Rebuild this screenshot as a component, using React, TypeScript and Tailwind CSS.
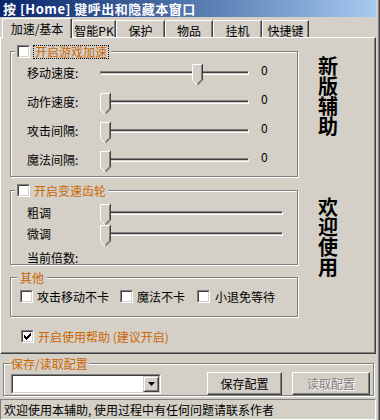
import type { ReactNode } from "react"

const CHECK_ROWS = [
  [6, 1],
  [5, 2],
  [4, 3],
  [3, 3],
  [0, 5],
  [1, 3],
  [2, 1],
]

function CheckBox({ checked }: { checked?: boolean }) {
  return (
    <div className="h-[13px] w-[13px] shrink-0 border border-t-[#808080] border-l-[#808080] border-r-white border-b-white">
      <div className="flex h-full w-full items-center justify-center border border-t-[#404040] border-l-[#404040] border-r-[#d4d0c8] border-b-[#d4d0c8] bg-white">
        {checked && (
          <svg width="7" height="7" viewBox="0 0 7 7">
            {CHECK_ROWS.map(([x, w], i) => (
              <rect key={i} x={x} y={i} width={w} height={1} fill="#000" />
            ))}
            <rect x={0} y={2} width={1} height={3} fill="#000" />
            <rect x={1} y={3} width={1} height={1} fill="#000" />
          </svg>
        )}
      </div>
    </div>
  )
}

function Thumb() {
  return (
    <svg width="11" height="21" viewBox="0 0 11 21">
      <path d="M0 0H11V16L5.5 21L0 16Z" fill="#d4d0c8" />
      <path d="M0.5 16V0.5H10" stroke="#fff" fill="none" />
      <path d="M0.5 16.5L5 21" stroke="#fff" fill="none" />
      <path d="M10.5 0V16L5.5 21" stroke="#404040" fill="none" />
      <path d="M9.5 1V15.5L5.5 19.5" stroke="#808080" fill="none" />
    </svg>
  )
}

function Slider({ className, pos = 0 }: { className: string; pos?: number }) {
  return (
    <div
      className={`relative h-[4px] shrink-0 border border-t-[#808080] border-l-[#808080] border-r-white border-b-white shadow-[inset_0_1px_0_#404040] ${className}`}
    >
      {/* thumb sits over the track */}
      <div className="absolute top-[-8px]" style={{ left: pos - 1 }}>
        <Thumb />
      </div>
    </div>
  )
}

function Group({
  header,
  className,
  headerClass,
  children,
}: {
  header: ReactNode
  className: string
  headerClass: string
  children?: ReactNode
}) {
  return (
    <div className={`shrink-0 border border-[#808080] shadow-[1px_1px_0_#fff,inset_1px_1px_0_#fff] ${className}`}>
      <div className={`-mt-[7px] flex h-[13px] w-fit items-center bg-[#d4d0c8] ${headerClass}`}>{header}</div>
      {children}
    </div>
  )
}

const speedRows = [
  { label: "移动速度:", pos: 92 },
  { label: "动作速度:", pos: 0 },
  { label: "攻击间隔:", pos: 0 },
  { label: "魔法间隔:", pos: 0 },
]

const tabs = [
  { label: "智能PK", w: "w-[44px]" },
  { label: "保护", w: "w-[49px]" },
  { label: "物品", w: "w-[48px]" },
  { label: "挂机", w: "w-[49px]" },
  { label: "快捷键", w: "w-[47px]" },
]

export default function App() {
  return (
    <div className="flex h-[420px] w-[380px] flex-col overflow-hidden bg-[#d4d0c8] pr-[4px] font-['Noto_Sans_CJK_SC',sans-serif] text-[12px] leading-[13px] text-black shadow-[inset_-1px_0_0_#404040,inset_-2px_0_0_#808080]">
      {/* Title bar */}
      <div className="mb-[1px] flex h-[17px] shrink-0 items-center bg-linear-to-r from-[#0a246a] to-[#a6caf0] pl-[3px] text-[13px] font-bold tracking-[0.5px] whitespace-pre text-white">
        按 [Home] 键呼出和隐藏本窗口
      </div>

      {/* Tabs */}
      <div className="flex h-[19px] shrink-0 items-end pl-[2px]">
        <div className="relative z-10 -mb-px flex h-[20px] w-[70px] items-center justify-center rounded-tl-[2px] border-t border-r border-l border-t-white border-r-[#404040] border-l-white bg-[#d4d0c8] pb-[1px] shadow-[inset_-1px_0_0_#808080]">
          加速/基本
        </div>
        {tabs.map((t) => (
          <div
            key={t.label}
            className={`flex h-[17px] items-center justify-center rounded-tl-[2px] border-t border-r border-l border-t-white border-r-[#404040] border-l-white pt-[2px] shadow-[inset_-1px_0_0_#808080] ${t.w}`}
          >
            {t.label}
          </div>
        ))}
      </div>

      {/* Tab panel */}
      <div className="flex h-[317px] shrink-0 border border-t-white border-r-[#404040] border-b-[#404040] border-l-white shadow-[inset_-1px_-1px_0_#808080]">
        <div className="ml-[9px] flex w-[288px] flex-col">
          <Group
            className="mt-[13px] h-[126px]"
            headerClass="ml-[4px] px-[2px]"
            header={
              <>
                <CheckBox />
                <span className="ml-[3px] flex h-[14px] items-center border border-dotted border-black px-[1px] leading-none whitespace-nowrap text-[#cc6600]">
                  开启游戏加速
                </span>
              </>
            }
          >
            {speedRows.map((r) => (
              <div key={r.label} className="flex h-[29px] items-center pl-[16px]">
                <span className="w-[73px] shrink-0">{r.label}</span>
                <Slider className="w-[149px]" pos={r.pos} />
                <span className="mb-[6px] ml-[12px]">0</span>
              </div>
            ))}
          </Group>

          <Group
            className="mt-[13px] h-[75px]"
            headerClass="ml-[4px] px-[2px]"
            header={
              <>
                <CheckBox />
                <span className="ml-[4px] text-[#cc6600]">开启变速齿轮</span>
              </>
            }
          >
            <div className="mt-[5px] flex h-[21px] items-center pl-[16px]">
              <span className="w-[73px] shrink-0">粗调</span>
              <Slider className="w-[183px]" />
            </div>
            <div className="flex h-[21px] items-center pl-[16px]">
              <span className="w-[73px] shrink-0">微调</span>
              <Slider className="w-[183px]" />
            </div>
            <div className="mt-[7px] pl-[16px]">当前倍数:</div>
          </Group>

          <Group
            className="mt-[12px] h-[40px]"
            headerClass="ml-[6px] px-[3px]"
            header={<span className="text-[#cc6600]">其他</span>}
          >
            <div className="flex h-[25px] items-center pl-[9px]">
              <div className="flex w-[100px] items-center">
                <CheckBox />
                <span className="ml-[4px]">攻击移动不卡</span>
              </div>
              <div className="flex w-[77px] items-center">
                <CheckBox />
                <span className="ml-[4px]">魔法不卡</span>
              </div>
              <div className="flex items-center">
                <CheckBox />
                <span className="ml-[5px]">小退免等待</span>
              </div>
            </div>
          </Group>

          <div className="mt-[13px] ml-[11px] flex h-[13px] items-center">
            <CheckBox checked />
            <span className="ml-[4px] text-[#cc6600]">开启使用帮助 (建议开启)</span>
          </div>
        </div>

        {/* Vertical captions */}
        <div className="ml-[20px] flex w-[20px] flex-col text-[20px] leading-[20px] font-bold">
          <div className="mt-[18px] break-all">新版辅助</div>
          <div className="mt-[61px] break-all">欢迎使用</div>
        </div>
      </div>

      {/* Save / load config */}
      <Group
        className="mt-[9px] ml-[3px] h-[33px] w-[371px]"
        headerClass="ml-[6px] px-[1px]"
        header={<span className="text-[#cc6600]">保存/读取配置</span>}
      >
        <div className="mt-[2px] flex items-center">
          <div className="ml-[7px] h-[20px] w-[150px] border border-t-[#808080] border-r-white border-b-white border-l-[#808080]">
            <div className="flex h-full w-full justify-end border border-t-[#404040] border-r-[#d4d0c8] border-b-[#d4d0c8] border-l-[#404040] bg-white">
              <div className="flex h-full w-[16px] items-center justify-center border border-t-[#d4d0c8] border-r-[#404040] border-b-[#404040] border-l-[#d4d0c8] bg-[#d4d0c8] shadow-[inset_1px_1px_0_#fff,inset_-1px_-1px_0_#808080]">
                <svg width="7" height="4" viewBox="0 0 7 4">
                  <path d="M0 0H7L3.5 4Z" fill="#000" />
                </svg>
              </div>
            </div>
          </div>
          <button className="ml-[46px] flex h-[23px] w-[75px] items-center justify-center border border-t-white border-r-[#404040] border-b-[#404040] border-l-white shadow-[inset_-1px_-1px_0_#808080]">
            保存配置
          </button>
          <button
            disabled
            className="ml-[10px] flex h-[23px] w-[78px] items-center justify-center border border-t-white border-r-[#404040] border-b-[#404040] border-l-white text-[#808080] shadow-[inset_-1px_-1px_0_#808080] [text-shadow:1px_1px_0_#fff]"
          >
            读取配置
          </button>
        </div>
      </Group>

      {/* Status bar */}
      <div className="mt-[3px] flex flex-1 items-center border border-t-[#808080] border-r-white border-b-white border-l-[#808080] pl-[3px]">
        欢迎使用本辅助, 使用过程中有任何问题请联系作者
      </div>
    </div>
  )
}
